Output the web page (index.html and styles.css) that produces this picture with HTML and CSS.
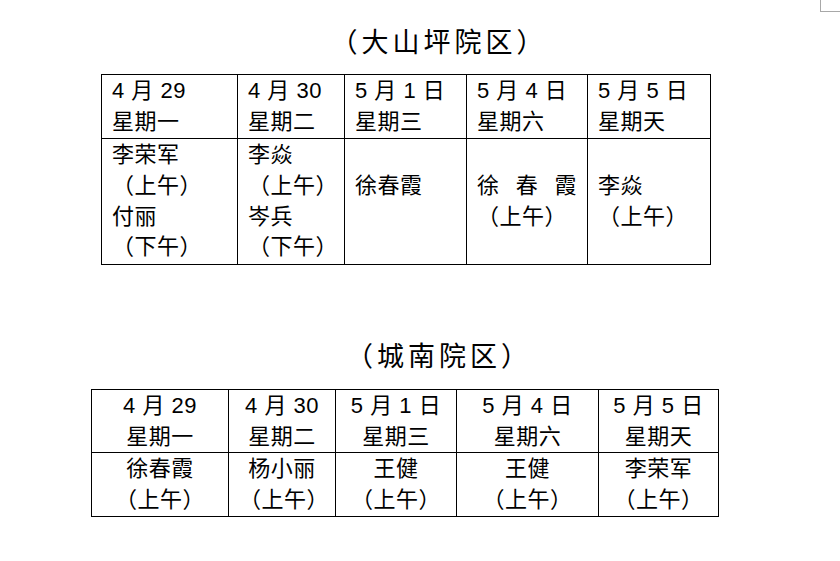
FILE: index.html
```html
<!DOCTYPE html>
<html lang="zh-CN">
<head>
<meta charset="utf-8">
<title>值班表</title>
<link rel="stylesheet" href="styles.css">
</head>
<body>
<div class="corner-mark"></div>
<div class="page">
  <h2 class="title title-first">（大山坪院区）</h2>
  <table class="sched sched-left t1">
    <colgroup>
      <col class="t1c1"><col class="t1c2"><col class="t1c3"><col class="t1c4"><col class="t1c5">
    </colgroup>
    <tr class="head">
      <td><div>4 月 29</div><div>星期一</div></td>
      <td><div>4 月 30</div><div>星期二</div></td>
      <td><div>5 月 1 日</div><div>星期三</div></td>
      <td><div>5 月 4 日</div><div>星期六</div></td>
      <td><div>5 月 5 日</div><div>星期天</div></td>
    </tr>
    <tr class="body">
      <td><div>李荣军</div><div>（上午）</div><div>付丽</div><div>（下午）</div></td>
      <td><div>李焱</div><div>（上午）</div><div>岑兵</div><div>（下午）</div></td>
      <td><div>徐春霞</div><div class="blank">&nbsp;</div></td>
      <td><div class="spread"><span>徐</span><span>春</span><span>霞</span></div><div>（上午）</div></td>
      <td><div>李焱</div><div>（上午）</div></td>
    </tr>
  </table>

  <h2 class="title title-second">（城南院区）</h2>
  <table class="sched sched-center t2">
    <colgroup>
      <col class="t2c1"><col class="t2c2"><col class="t2c3"><col class="t2c4"><col class="t2c5">
    </colgroup>
    <tr class="head">
      <td><div>4 月 29</div><div>星期一</div></td>
      <td><div>4 月 30</div><div>星期二</div></td>
      <td><div>5 月 1 日</div><div>星期三</div></td>
      <td><div>5 月 4 日</div><div>星期六</div></td>
      <td><div>5 月 5 日</div><div>星期天</div></td>
    </tr>
    <tr class="body">
      <td><div>徐春霞</div><div>（上午）</div></td>
      <td><div>杨小丽</div><div>（上午）</div></td>
      <td><div>王健</div><div>（上午）</div></td>
      <td><div>王健</div><div>（上午）</div></td>
      <td><div>李荣军</div><div>（上午）</div></td>
    </tr>
  </table>
</div>
</body>
</html>
```

FILE: styles.css
```css
html, body {
  margin: 0;
  padding: 0;
  background: #ffffff;
}

body {
  width: 840px;
  height: 561px;
  overflow: hidden;
  position: relative;
  color: #000000;
  font-family: "Liberation Sans", "Noto Sans CJK SC", sans-serif;
}

.corner-mark {
  position: absolute;
  left: 820px;
  top: 0;
  width: 20px;
  height: 11px;
  border-left: 1px solid #a8a8a8;
  border-bottom: 1px solid #a8a8a8;
}

.page {
  display: flex;
  flex-direction: column;
  padding-top: 23px;
}

.title {
  margin: 0;
  font-weight: normal;
  font-size: 27px;
  letter-spacing: 4px;
  line-height: 40px;
  height: 40px;
  text-align: center;
  padding-left: 38px;
}

.title-first {
  margin-bottom: 11px;
}

.title-second {
  margin-top: 72px;
  margin-bottom: 12px;
}

.sched {
  border-collapse: collapse;
  table-layout: fixed;
  font-size: 22px;
  letter-spacing: 0.5px;
  line-height: 30.67px;
}

.sched td {
  border: 1px solid #000000;
  white-space: nowrap;
}

.t1 td {
  padding: 1px 10px 1px 10px;
}

.t2 td {
  padding: 1px 10px 0 10px;
}

.t1 {
  margin-left: 101px;
  width: 609px;
}

.t2 {
  margin-left: 91px;
  width: 627px;
}

.t1c1 { width: 136px; }
.t1c2 { width: 107px; }
.t1c3 { width: 122px; }
.t1c4 { width: 121px; }
.t1c5 { width: 123px; }

.t2c1 { width: 137px; }
.t2c2 { width: 107px; }
.t2c3 { width: 121px; }
.t2c4 { width: 142px; }
.t2c5 { width: 120px; }

.sched-left td {
  text-align: left;
  vertical-align: middle;
}

.sched-left .head td {
  vertical-align: top;
}

.sched-center td {
  text-align: center;
  vertical-align: top;
}

.spread {
  display: flex;
  justify-content: space-between;
}
```
